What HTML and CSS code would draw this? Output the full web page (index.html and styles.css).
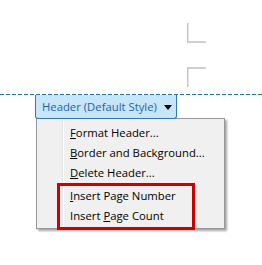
FILE: index.html
```html
<html>
  <head>
    <link rel="stylesheet" href="styles.css">
  </head>
  <body>
    <div class="page-area">
      <div class="marks">
        <div class="mark mark-bottom"></div>
        <div class="mark mark-top"></div>
      </div>
    </div>

    <div class="header-line"></div>

    <div class="header-tab">
      <span class="tab-label">Header (Default Style)</span>
      <span class="tab-arrow"></span>
    </div>

    <div class="menu">
      <div class="menu-item"><u>F</u>ormat Header...</div>
      <div class="menu-item"><u>B</u>order and Background...</div>
      <div class="menu-item"><u>D</u>elete Header...</div>
      <div class="menu-group">
        <div class="menu-item"><u>I</u>nsert Page Number</div>
        <div class="menu-item">Insert <u>P</u>age Count</div>
      </div>
    </div>
  </body>
</html>
```

FILE: styles.css
```css
/* Whole window */
body {
  margin: 0;
  background: #ffffff;
  font-family: "Open Sans", "Noto Sans", sans-serif;
  font-size: 11.3px;
}

/* Blank page above the header boundary */
.page-area {
  height: 94px;
}

  /* Text area corner marks */
  .marks {
    display: flex;
    flex-direction: column;
    gap: 24px;
    margin-left: 187px;
    padding-top: 23px;
  }

    .mark {
      width: 18px;
      height: 18px;
      border-left: 1px solid #c4c4c4;
      box-shadow: inset 1px 0 0 #e4e4e4;
    }

    .mark-bottom {
      border-bottom: 2px solid #cfcfcf;
    }

    .mark-top {
      border-top: 2px solid #cfcfcf;
    }

/* Dashed header boundary */
.header-line {
  height: 1px;
  background: repeating-linear-gradient(90deg, #1b74b6 0 4px, transparent 4px 6px);
}

/* Header button tab */
.header-tab {
  display: flex;
  align-items: center;
  gap: 7px;
  width: 134px;
  height: 23px;
  margin-left: 35px;
  padding-left: 6px;
  background: #c7e6f9;
  border: 1px solid #2d79b6;
  border-top: none;
  border-radius: 0 0 3px 3px;
  position: relative;
  z-index: 2;
}

  .tab-label {
    color: #2364a6;
    white-space: nowrap;
  }

  .tab-arrow {
    width: 0;
    height: 0;
    border-left: 4px solid transparent;
    border-right: 4px solid transparent;
    border-top: 5px solid #000000;
    margin-top: 1px;
  }

/* Context menu */
.menu {
  width: 187px;
  margin-left: 36px;
  margin-top: -1px;
  padding: 4px 0 2px 0;
  background: #f0f0f0 linear-gradient(90deg, transparent 25px, #e2e3e3 25px 26px, #ffffff 26px 27px, transparent 27px);
  border: 1px solid #979797;
  box-shadow: 2px 2px 2px rgba(0, 0, 0, 0.35);
}

  .menu-item {
    height: 20px;
    line-height: 20px;
    padding-left: 33px;
    color: #000000;
    white-space: nowrap;
  }

  /* Highlighted group with red annotation box */
  .menu-group {
    position: relative;
    margin-top: 3px;
  }

  .menu-group::after {
    content: "";
    position: absolute;
    left: 20px;
    top: -3px;
    width: 132px;
    height: 41px;
    border: 3px solid #cc0000;
  }
```
